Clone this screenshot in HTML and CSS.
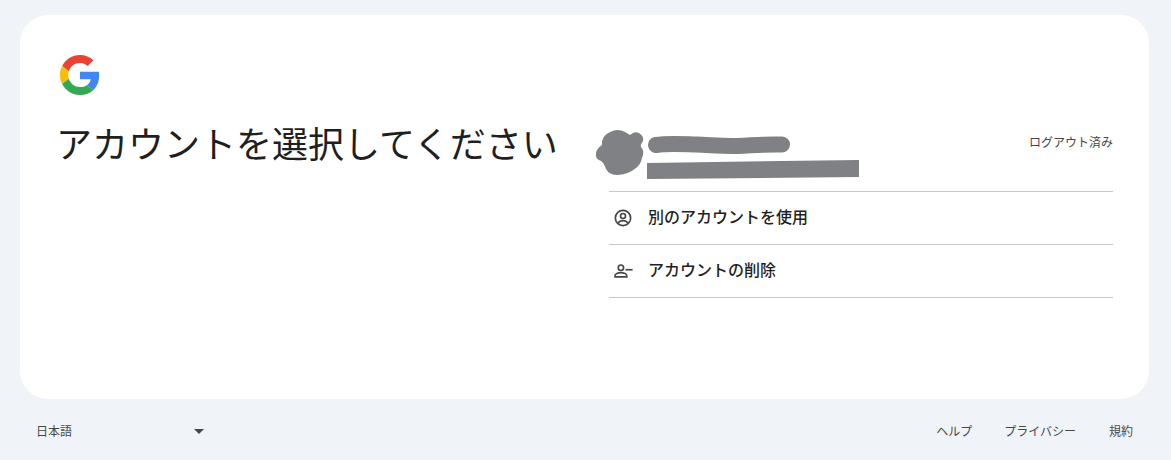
FILE: index.html
```html
<!DOCTYPE html>
<html lang="ja">
<head>
<meta charset="utf-8">
<title>アカウントの選択</title>
<link rel="stylesheet" href="styles.css">
</head>
<body>
<main class="card">
  <svg class="logo" viewBox="0 0 48 48" aria-label="Google">
    <path fill="#EA4335" d="M24 9.5c3.54 0 6.71 1.22 9.21 3.6l6.85-6.85C35.9 2.38 30.47 0 24 0 14.62 0 6.51 5.38 2.56 13.22l7.98 6.19C12.43 13.72 17.74 9.5 24 9.5z"/>
    <path fill="#4285F4" d="M46.98 24.55c0-1.57-.15-3.09-.38-4.55H24v9.02h12.94c-.58 2.96-2.26 5.48-4.78 7.18l7.73 6c4.51-4.18 7.09-10.36 7.09-17.65z"/>
    <path fill="#FBBC05" d="M10.53 28.59c-.48-1.45-.76-2.99-.76-4.59s.27-3.14.76-4.59l-7.98-6.19C.92 16.46 0 20.12 0 24c0 3.88.92 7.54 2.56 10.78l7.97-6.19z"/>
    <path fill="#34A853" d="M24 48c6.48 0 11.93-2.13 15.89-5.81l-7.73-6c-2.15 1.45-4.92 2.3-8.16 2.3-6.26 0-11.57-4.22-13.47-9.91l-7.98 6.19C6.51 42.62 14.62 48 24 48z"/>
  </svg>
  <div class="columns">
    <h1 class="title">アカウントを選択してください</h1>
    <div class="panel">
      <div class="account">
        <div class="account-spacer"></div>
        <span class="status">ログアウト済み</span>
        <svg class="scribble" viewBox="0 0 270 60" aria-hidden="true">
          <path fill="#808184" d="M15 4Q23 0 30 4L35 7Q39 3 44 5Q49 8 48 13Q45 17 46 19Q50 23 47 30Q46 36 41 40Q34 46 23 47Q14 47 11 41Q9 35 6 33Q0 31 1 26Q1 21 7 17Q6 8 15 4z"/>
          <path fill="none" stroke="#808184" stroke-width="16" stroke-linecap="round" d="M61 17c12-2 25-1 40-.5s25 2 42 1.500c14-.5 26-2 44-1.500"/>
          <path fill="#808184" d="M52 35l212-3v17l-212 2z"/>
        </svg>
      </div>
      <div class="row">
        <svg class="row-icon" viewBox="0 0 24 24" aria-hidden="true">
          <circle cx="12" cy="12" r="9.2" fill="none" stroke="#444746" stroke-width="2"/>
          <circle cx="12" cy="9.6" r="3" fill="none" stroke="#444746" stroke-width="2"/>
          <path fill="none" stroke="#444746" stroke-width="2" d="M5.800 18.400c1.500-2.100 3.700-3.200 6.200-3.200s4.700 1.100 6.200 3.200"/>
        </svg>
        <span class="row-label">別のアカウントを使用</span>
      </div>
      <div class="row">
        <svg class="row-icon" viewBox="0 0 24 24" aria-hidden="true">
          <circle cx="9.5" cy="8" r="3.2" fill="none" stroke="#444746" stroke-width="2"/>
          <path fill="none" stroke="#444746" stroke-width="2" d="M2.500 19v-1.600c0-1.900 3.400-3.400 7-3.400s7 1.500 7 3.400V19z"/>
          <path fill="#444746" d="M15 9.500h8.500v2H15z"/>
        </svg>
        <span class="row-label">アカウントの削除</span>
      </div>
    </div>
  </div>
</main>
<footer class="footer">
  <div class="lang">
    <span>日本語</span>
    <span class="caret"></span>
  </div>
  <nav class="links">
    <a class="link link-help">ヘルプ</a>
    <a class="link">プライバシー</a>
    <a class="link">規約</a>
  </nav>
</footer>
</body>
</html>
```

FILE: styles.css
```css
* {
  box-sizing: border-box;
}

html,
body {
  height: 100%;
}

body {
  margin: 0;
  padding: 15px 22px 0 20px;
  background: #f0f4f9;
  color: #1f1f1f;
  font-family: "Noto Sans CJK JP", "Noto Sans", sans-serif;
  overflow: hidden;
}

.card {
  height: 384px;
  padding: 40px 36px 0 40px;
  background: #fff;
  border-radius: 28px;
}

.logo {
  display: block;
  width: 40px;
  height: 40px;
}

.columns {
  display: flex;
  margin-top: 26px;
}

.title {
  width: 553px;
  margin: -1px 0 0 -4px;
  font-size: 36px;
  font-weight: 400;
  line-height: 44px;
  white-space: nowrap;
}

.panel {
  flex: 1;
  min-width: 0;
}

.account {
  position: relative;
  display: flex;
  justify-content: space-between;
  height: 71px;
  border-bottom: 1px solid #c7c7c7;
}

.account-spacer {
  width: 1px;
}

.status {
  margin-top: 13px;
  font-size: 12px;
  line-height: 16px;
  color: #444746;
}

.scribble {
  position: absolute;
  left: -14px;
  top: 7px;
  width: 270px;
  height: 60px;
}

.row {
  display: flex;
  align-items: center;
  height: 53px;
  padding-left: 4px;
  border-bottom: 1px solid #c7c7c7;
}

.row-icon {
  flex: none;
  width: 20px;
  height: 20px;
  margin-right: 15px;
}

.row-label {
  margin-bottom: 4px;
  font-size: 16px;
  font-weight: 500;
  line-height: 20px;
  color: #1f1f1f;
}

.footer {
  display: flex;
  justify-content: space-between;
  align-items: center;
  height: 63px;
  font-size: 12px;
  color: #444746;
}

.lang {
  display: flex;
  align-items: center;
  justify-content: space-between;
  width: 168px;
  margin-left: 16px;
}

.caret {
  width: 0;
  height: 0;
  margin-top: 1px;
  border-left: 5px solid transparent;
  border-right: 5px solid transparent;
  border-top: 5px solid #444746;
}

.links {
  display: flex;
  gap: 33px;
  margin-right: 16px;
}

.link {
  color: #444746;
}

.link-help {
  margin-right: -1px;
}
```
